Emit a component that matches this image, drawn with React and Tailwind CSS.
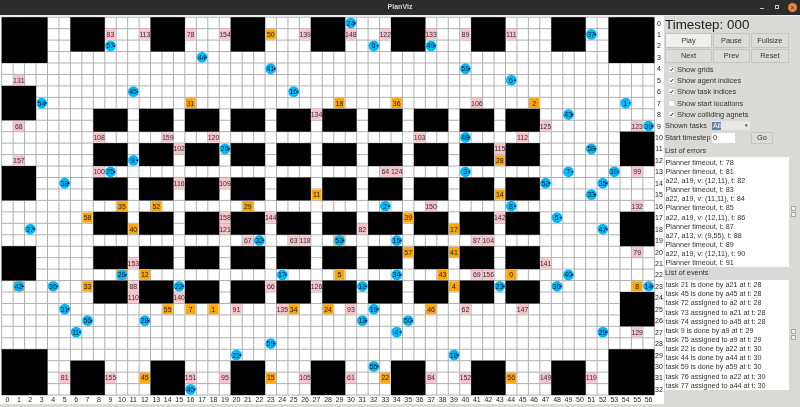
import React from 'react';

const CELL = 11.45;
const OX = 1.7;
const OY = 1.2;

// [col, row, width, height]
const blocks = [
  [0, 0, 4, 4], [53, 0, 4, 4], [0, 29, 4, 4], [53, 29, 4, 4],
  [0, 6, 3, 3], [0, 13, 3, 3], [0, 20, 3, 3],
  [54, 10, 3, 3], [54, 17, 3, 3], [54, 24, 3, 3],
];
[6, 13, 20, 27, 34, 41, 48].forEach((c) => {
  blocks.push([c, 0, 3, 3]);
  blocks.push([c, 30, 3, 3]);
});
[8, 12, 16, 20, 24, 28, 32, 36, 40, 44].forEach((c) => {
  [8, 11, 14, 17, 20, 23].forEach((r) => blocks.push([c, r, 3, 2]));
});

// unassigned tasks: [label, col, row]
const pink = [
  [83, 9, 1], [113, 12, 1], [78, 16, 1], [154, 19, 1], [139, 26, 1], [131, 1, 5], [134, 27, 8], [68, 1, 9],
  [148, 30, 1], [122, 33, 1], [133, 37, 1], [89, 40, 1], [111, 44, 1], [106, 41, 7], [125, 47, 9], [123, 55, 9],
  [108, 8, 10], [159, 14, 10], [120, 18, 10], [102, 15, 11], [157, 1, 12], [100, 8, 13], [116, 15, 14], [109, 19, 14],
  [158, 19, 17], [144, 23, 17], [121, 19, 18], [67, 21, 19], [63, 25, 19], [118, 26, 19], [153, 11, 21],
  [103, 36, 10], [112, 45, 10], [115, 43, 11], [64, 33, 13], [124, 34, 13], [99, 55, 13], [150, 37, 16], [132, 55, 16],
  [142, 43, 17], [82, 31, 18], [87, 41, 19], [104, 42, 19], [79, 55, 20], [141, 47, 21],
  [88, 11, 23], [66, 23, 23], [126, 27, 23], [110, 11, 24], [140, 15, 24], [91, 20, 25], [135, 24, 25],
  [81, 5, 31], [155, 9, 31], [151, 16, 31], [95, 19, 31], [105, 26, 31],
  [69, 41, 22], [156, 42, 22], [93, 30, 25], [62, 40, 25], [147, 45, 25], [129, 55, 27],
  [61, 30, 31], [84, 37, 31], [152, 40, 31], [149, 47, 31], [119, 51, 31],
];

// assigned tasks
const orange = [
  [50, 23, 1], [31, 16, 7], [18, 29, 7], [36, 34, 7], [2, 46, 7], [11, 27, 15], [35, 10, 16], [52, 13, 16], [29, 21, 16],
  [58, 7, 17], [40, 11, 18], [28, 43, 12], [14, 43, 15], [39, 35, 17], [17, 39, 18], [57, 35, 20], [41, 39, 20],
  ['', 29, 19], ['', 10, 22], ['', 1, 23], [12, 12, 22], [33, 7, 23], [55, 14, 25], [7, 16, 25], [1, 18, 25], [34, 25, 25],
  [24, 28, 25], [45, 12, 31], [15, 23, 31], [5, 29, 22], [43, 38, 22], [0, 44, 22], [4, 39, 23], [8, 55, 23],
  [46, 37, 25], [22, 33, 31], [56, 44, 31],
];

const agents = [
  [57, 9, 2], [44, 17, 3], [41, 23, 4], [45, 11, 6], [16, 25, 6], [54, 3, 7], [24, 30, 0], [0, 32, 2], [49, 37, 2],
  [37, 51, 1], [51, 40, 4], [6, 44, 5], [1, 54, 7], [43, 49, 8], [39, 56, 9], [20, 19, 11], [9, 11, 12], [25, 9, 13],
  [38, 5, 14], [27, 2, 18], [32, 22, 19], [48, 40, 10], [58, 51, 11], [3, 40, 13], [7, 49, 13], [10, 53, 13], [52, 47, 14],
  [35, 52, 14], [33, 51, 15], [2, 33, 16], [8, 44, 16], [5, 48, 17], [47, 52, 18], [53, 29, 19], [15, 34, 19],
  [26, 10, 22], [17, 24, 22], [42, 1, 23], [36, 4, 23], [22, 15, 23], [31, 5, 25], [56, 7, 26], [28, 12, 26], [11, 6, 27],
  [59, 23, 28], [21, 20, 29], [46, 16, 32], [34, 34, 22], [40, 49, 22], [12, 31, 23], [23, 43, 23], [30, 48, 23], [14, 56, 23],
  [19, 32, 25], [13, 31, 26], [50, 35, 26], [4, 34, 27], [29, 52, 27], [18, 39, 29], [55, 32, 30],
];

const errors = [
  'Planner timeout, t: 78', 'Planner timeout, t: 81', 'a22, a19, v: (12,11), t: 82', 'Planner timeout, t: 83',
  'a22, a19, v: (11,11), t: 84', 'Planner timeout, t: 85', 'a22, a19, v: (12,11), t: 86', 'Planner timeout, t: 87',
  'a27, a13, v: (9,55), t: 88', 'Planner timeout, t: 89', 'a22, a19, v: (12,11), t: 90', 'Planner timeout, t: 91',
];

const events = [
  'task 21 is done by a21 at t: 28', 'task 45 is done by a45 at t: 28', 'task 72 assigned to a2 at t: 28',
  'task 73 assigned to a21 at t: 28', 'task 74 assigned to a45 at t: 28', 'task 9 is done by a9 at t: 29',
  'task 75 assigned to a9 at t: 29', 'task 22 is done by a22 at t: 30', 'task 44 is done by a44 at t: 30',
  'task 59 is done by a59 at t: 30', 'task 76 assigned to a22 at t: 30', 'task 77 assigned to a44 at t: 30',
];

const checks = [
  ['Show grids', true], ['Show agent indices', true], ['Show task indices', true],
  ['Show start locations', false], ['Show colliding agnets', true],
];

const range = (n) => Array.from({ length: n }, (_, i) => i);

function MapView() {
  const cx = (c) => OX + (c + 0.5) * CELL;
  const cy = (r) => OY + (r + 0.5) * CELL;
  return (
    <svg width="664" height="388.5" className="shrink-0">
      <rect width="664" height="388.5" fill="#fff" />
      {range(58).map((c) => (
        <line key={c} x1={OX + c * CELL} x2={OX + c * CELL} y1={OY} y2={OY + 33 * CELL} stroke="#b0b0b0" strokeWidth="1" />
      ))}
      {range(34).map((r) => (
        <line key={r} y1={OY + r * CELL} y2={OY + r * CELL} x1={OX} x2={OX + 57 * CELL} stroke="#b0b0b0" strokeWidth="1" />
      ))}
      {pink.map(([t, c, r]) => (
        <g key={t}>
          <rect x={cx(c) - 5} y={cy(r) - 5} width="10" height="10" fill="#fbc1cb" />
          <text x={cx(c)} y={cy(r) + 2.6} fontSize="7" textAnchor="middle" fill="#333">{t}</text>
        </g>
      ))}
      {orange.map(([t, c, r]) => (
        <g key={`${c}-${r}`}>
          <rect x={cx(c) - 5} y={cy(r) - 5} width="10" height="10" fill="#ffa500" />
          <text x={cx(c)} y={cy(r) + 2.6} fontSize="7" textAnchor="middle" fill="#222">{t}</text>
        </g>
      ))}
      {blocks.map(([c, r, w, h]) => (
        <rect key={`${c}-${r}`} x={OX + c * CELL} y={OY + r * CELL} width={w * CELL} height={h * CELL} fill="#000" />
      ))}
      {agents.map(([a, c, r]) => (
        <g key={a}>
          <circle cx={cx(c)} cy={cy(r)} r="5.4" fill="#00bbf9" />
          <circle cx={cx(c) + 3.8} cy={cy(r)} r="0.9" fill="#000080" />
          <text x={cx(c) - 0.3} y={cy(r) + 2.6} fontSize="7" textAnchor="middle" fill="#0a1a30">{a}</text>
        </g>
      ))}
      {range(33).map((r) => (
        <text key={r} x="659" y={cy(r) + 2.6} fontSize="7" textAnchor="middle" fill="#222">{r}</text>
      ))}
      {range(57).map((c) => (
        <text key={c} x={cx(c)} y="386" fontSize="7" textAnchor="middle" fill="#222">{c}</text>
      ))}
    </svg>
  );
}

function Btn({ label, active }) {
  return (
    <button className={`h-[14.7px] rounded-[1px] border border-[#c4c3bf] text-[7.4px] leading-none text-[#333] ${active ? 'bg-[#efefed]' : 'bg-[#dcdbd7]'}`}>
      {label}
    </button>
  );
}

function Spinner() {
  return (
    <div className="flex flex-col gap-px mt-[-1px]">
      <div className="w-[5px] h-[5px] bg-[#efeeea] border border-[#a8a7a3]" />
      <div className="w-[5px] h-[5px] bg-[#efeeea] border border-[#a8a7a3]" />
    </div>
  );
}

function ListBox({ items }) {
  return (
    <div className="flex items-center">
      <div className="w-[124px] h-[110px] bg-white pl-[0.5px] pt-[0.5px] text-[7.2px] leading-[9.15px] text-[#333] whitespace-nowrap overflow-hidden">
        {items.map((t) => <div key={t} className="h-[9.15px]">{t}</div>)}
      </div>
      <div className="ml-[2px]"><Spinner /></div>
    </div>
  );
}

export default function App() {
  return (
    <div className="w-[800px] h-[407px] overflow-hidden flex flex-col bg-[#dad9d5] blur-[0.4px] font-['Liberation_Sans',sans-serif]">
      <div className="h-[14.5px] shrink-0 bg-[#2c2c2b] flex items-center justify-center relative">
        <span className="text-[7px] font-bold text-[#d8d8d6]">PlanViz</span>
        <div className="absolute right-[3px] inset-y-0 flex items-center">
          <div className="w-[3.5px] h-[1px] bg-[#c8c8c8] mt-[2px]" />
          <div className="ml-[11.5px] w-[4px] h-[4px] border border-[#c8c8c8]" />
          <div className="ml-[9px] w-[9px] h-[9px] rounded-full bg-[#e9843f] flex items-center justify-center text-[7px] leading-none text-[#3a3a3a]">×</div>
        </div>
      </div>
      <div className="h-[1px] shrink-0 bg-[#eeeeee]" />
      <div className="flex flex-1 min-h-0 items-start">
        <MapView />
        <div className="flex-1 pl-[1px] flex flex-col text-[7.4px] text-[#333]">
          <div className="h-[17.8px] text-[13.4px] leading-[17px] text-[#222]">Timestep: 000</div>
          <div className="grid grid-cols-[47px_37.5px_38px] gap-[0.7px]">
            <Btn label="Play" active />
            <Btn label="Pause" />
            <Btn label="Fullsize" />
            <Btn label="Next" />
            <Btn label="Prev" />
            <Btn label="Reset" />
          </div>
          <div className="flex flex-col">
            {checks.map(([label, on]) => (
              <div key={label} className="h-[11.4px] flex items-center pl-[3.7px] gap-[3.3px]">
                <div className="w-[5px] h-[5px] bg-white flex items-center justify-center">
                  {on && (
                    <svg width="5" height="5" viewBox="0 0 5 5"><path d="M0.8 2.6 L2 3.9 L4.2 1" fill="none" stroke="#333" strokeWidth="1" /></svg>
                  )}
                </div>
                <span>{label}</span>
              </div>
            ))}
          </div>
          <div className="h-[11px] flex items-center">
            <span className="w-[47px]">Shown tasks</span>
            <div className="w-[38px] h-[9px] bg-[#e8e7e3] flex items-center justify-between">
              <span className="bg-[#5a7fb5] text-white px-[1px] text-[7px] leading-[8px] w-[9px]">All</span>
              <span className="text-[5px] leading-none pr-[2px]">▾</span>
            </div>
          </div>
          <div className="h-[12px] flex items-center mt-[0.6px]">
            <span className="w-[47px] whitespace-nowrap">Start timestep</span>
            <div className="w-[23px] h-[10px] bg-white leading-[10px] pl-[1px]">0</div>
            <button className="ml-[16px] w-[22px] h-[12.5px] border border-[#c4c3bf] bg-[#dcdbd7] rounded-[1px] text-[7.4px] leading-none">Go</button>
          </div>
          <div className="h-[13.3px] leading-[13px]">List of errors</div>
          <ListBox items={errors} />
          <div className="h-[12.4px] leading-[12px]">List of events</div>
          <ListBox items={events} />
        </div>
      </div>
    </div>
  );
}
